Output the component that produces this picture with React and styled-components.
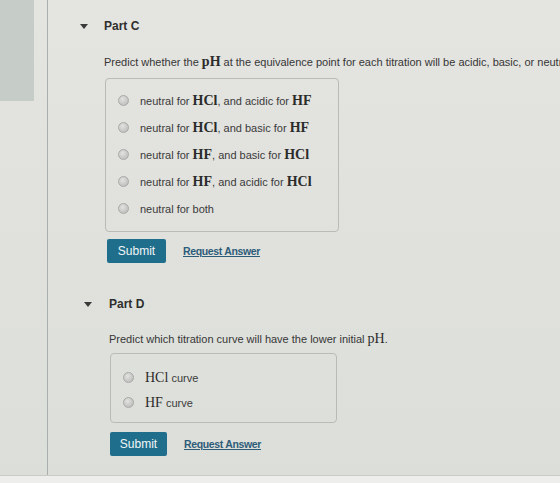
import React from 'react'
import styled, { createGlobalStyle } from 'styled-components'

const GlobalStyle = createGlobalStyle`
  html, body {
    margin: 0;
    padding: 0;
    background: #e0e1dd;
  }
  body {
    font-family: "Liberation Sans", Arial, sans-serif;
    color: #333;
  }
`

const Screen = styled.div`
  width: 560px;
  height: 483px;
  overflow: hidden;
  display: flex;
  flex-direction: column;
  background: linear-gradient(180deg, #e4e4e1 0%, #e0e1dd 50%, #dcdfd9 100%);
`

const Main = styled.div`
  flex: 1;
  display: flex;
  min-height: 0;
`

const Rail = styled.div`
  width: 47px;
  flex-shrink: 0;
  border-right: 1px solid #a9aeae;
`

const RailBlock = styled.div`
  width: 34px;
  height: 101px;
  background: #c6cdc9;
`

const Content = styled.div`
  flex: 1;
  min-width: 0;
  display: flex;
  flex-direction: column;
`

const Part = styled.section`
  display: flex;
  flex-direction: column;
  padding-left: ${p => p.$indent}px;
  padding-top: ${p => p.$top}px;
`

const PartHeader = styled.div`
  display: flex;
  align-items: center;
  height: 20px;
`

const Caret = styled.span`
  width: 0;
  height: 0;
  border-left: 4px solid transparent;
  border-right: 4px solid transparent;
  border-top: 5px solid #3a3a3a;
  margin-right: ${p => p.$space}px;
`

const PartTitle = styled.h3`
  margin: 0;
  font-size: 12px;
  font-weight: bold;
  color: #2e2e2e;
`

const Prompt = styled.p`
  margin: ${p => p.$gap}px 0 0 ${p => p.$shift}px;
  font-size: 11px;
  line-height: 18px;
  white-space: nowrap;
  color: #363636;
`

const Chem = styled.span`
  font-family: "Liberation Serif", "Times New Roman", serif;
  font-size: 14px;
  font-weight: ${p => (p.$light ? 'normal' : 'bold')};
  color: #2b2b2b;
`

const Choices = styled.div`
  margin: ${p => p.$gap}px 0 0 ${p => p.$shift}px;
  width: ${p => p.$width}px;
  box-sizing: border-box;
  border: 1px solid #b9bbb8;
  border-radius: 4px;
  padding: ${p => p.$padTop}px 0 ${p => p.$padBottom}px 12px;
  display: flex;
  flex-direction: column;
`

const Choice = styled.label`
  display: flex;
  align-items: center;
  height: ${p => p.$row}px;
  font-size: 11px;
  color: #3a3a3a;
  white-space: nowrap;
`

const Radio = styled.span`
  width: 11px;
  height: 11px;
  border-radius: 50%;
  box-sizing: border-box;
  border: 1px solid #a9aaa8;
  background: radial-gradient(circle at 40% 35%, #e2e2e0 0%, #c3c4c2 70%, #b4b5b3 100%);
  margin-right: 11px;
  flex-shrink: 0;
`

const Actions = styled.div`
  display: flex;
  align-items: center;
  margin: ${p => p.$gap}px 0 0 ${p => p.$shift}px;
`

const SubmitButton = styled.button`
  width: ${p => p.$width}px;
  height: 24px;
  border: none;
  border-radius: 2px;
  background: #1f6e8c;
  color: #f2f6f7;
  font-family: "Liberation Sans", Arial, sans-serif;
  font-size: 12px;
  padding: 0;
`

const RequestLink = styled.a`
  margin-left: 17px;
  font-size: 10.5px;
  font-weight: bold;
  color: #2d5c79;
  text-decoration: underline;
  letter-spacing: -0.35px;
`

const BottomEdge = styled.div`
  height: 7px;
  border-top: 1px solid #c9cbc7;
  background: #eeeeec;
`

const Option = ({ row, children }) => (
  <Choice $row={row}>
    <Radio />
    <span>{children}</span>
  </Choice>
)

export default function App() {
  return (
    <>
      <GlobalStyle />
      <Screen>
        <Main>
          <Rail>
            <RailBlock />
          </Rail>
          <Content>
            <Part $indent={32} $top={16}>
              <PartHeader>
                <Caret $space={16} />
                <PartTitle>Part C</PartTitle>
              </PartHeader>
              <Prompt $gap={17} $shift={24}>
                Predict whether the <Chem>pH</Chem> at the equivalence point for each titration will be acidic, basic, or neutral.
              </Prompt>
              <Choices $gap={7} $shift={25} $width={234} $padTop={8} $padBottom={9}>
                <Option row={27}>neutral for <Chem>HCl</Chem>, and acidic for <Chem>HF</Chem></Option>
                <Option row={27}>neutral for <Chem>HCl</Chem>, and basic for <Chem>HF</Chem></Option>
                <Option row={27}>neutral for <Chem>HF</Chem>, and basic for <Chem>HCl</Chem></Option>
                <Option row={27}>neutral for <Chem>HF</Chem>, and acidic for <Chem>HCl</Chem></Option>
                <Option row={27}>neutral for both</Option>
              </Choices>
              <Actions $gap={7} $shift={27}>
                <SubmitButton $width={59}>Submit</SubmitButton>
                <RequestLink>Request Answer</RequestLink>
              </Actions>
            </Part>
            <Part $indent={36} $top={31}>
              <PartHeader>
                <Caret $space={17} />
                <PartTitle>Part D</PartTitle>
              </PartHeader>
              <Prompt $gap={16} $shift={25}>
                Predict which titration curve will have the lower initial <Chem $light>pH</Chem>.
              </Prompt>
              <Choices $gap={5} $shift={26} $width={227} $padTop={11} $padBottom={7}>
                <Option row={25}><Chem $light>HCl</Chem> curve</Option>
                <Option row={25}><Chem $light>HF</Chem> curve</Option>
              </Choices>
              <Actions $gap={9} $shift={26}>
                <SubmitButton $width={57}>Submit</SubmitButton>
                <RequestLink>Request Answer</RequestLink>
              </Actions>
            </Part>
          </Content>
        </Main>
        <BottomEdge />
      </Screen>
    </>
  )
}
